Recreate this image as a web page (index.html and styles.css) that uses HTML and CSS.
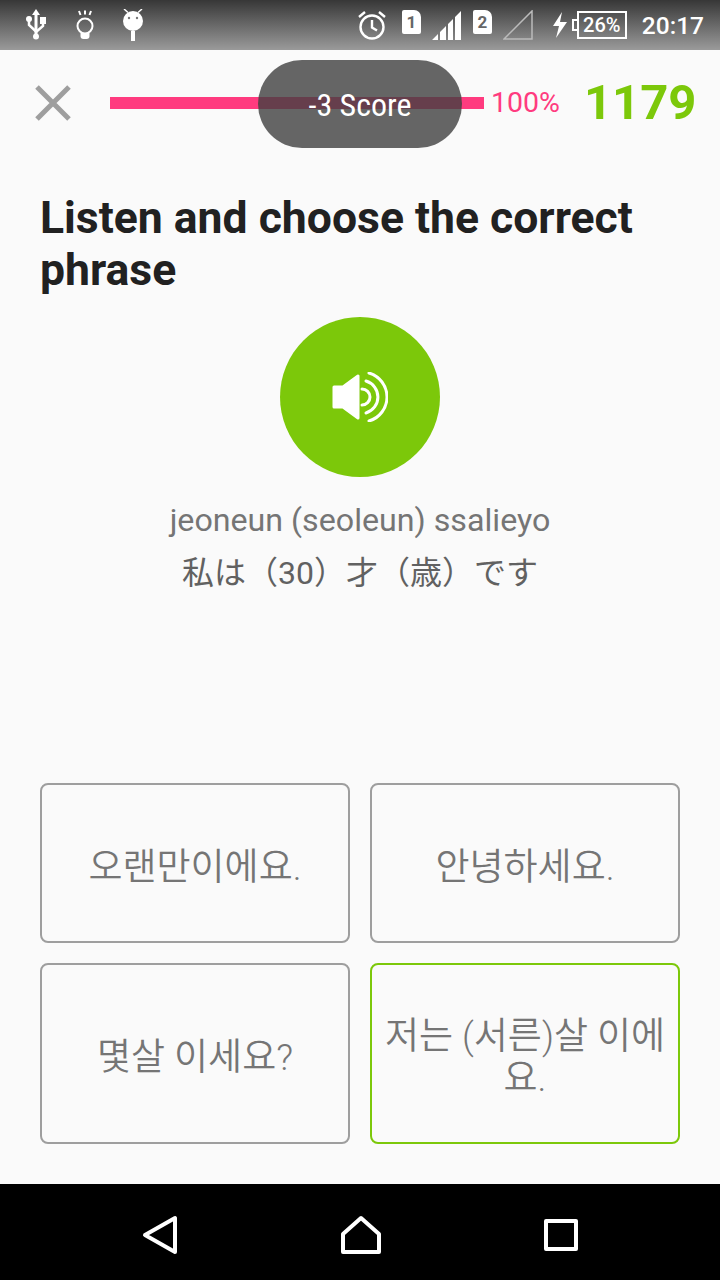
FILE: index.html
```html
<!DOCTYPE html>
<html lang="en">
  <head>
    <meta charset="UTF-8" />
    <meta name="viewport" content="width=device-width, initial-scale=1.0" />
    <title>Listen and choose</title>
    <link rel="stylesheet" href="styles.css">
  </head>
  <body>
    <div class="statusbar">
      <div class="status-left">
        <svg width="24" height="32" viewBox="0 0 24 32" fill="#fff" stroke="#fff">
          <path d="M12 0l4 6H8z" stroke="none"/>
          <path d="M12 4v24" stroke-width="3" fill="none"/>
          <path d="M5 11v5l7 6.500M19 14v3l-7 6" stroke-width="2.500" fill="none"/>
          <circle cx="5" cy="10" r="3" stroke="none"/>
          <rect x="16" y="8" width="6" height="7" stroke="none"/>
          <circle cx="12" cy="27.500" r="3" stroke="none"/>
        </svg>
        <svg width="20" height="32" viewBox="0 0 20 32" fill="none" stroke="#fff" stroke-width="2">
          <circle cx="10" cy="17" r="7.500"/>
          <path d="M4 2l1.500 4M10 1.500v4M16 2l-1.500 4"/>
          <path d="M5.500 24h9v3a3 3 0 0 1-3 3h-3a3 3 0 0 1-3-3z" fill="#fff" stroke="none"/>
        </svg>
        <svg width="22" height="32" viewBox="0 0 22 32" fill="#fff">
          <path d="M2 0l4 3.500M20 0l-4 3.500" stroke="#fff" stroke-width="1.500"/>
          <circle cx="11" cy="12" r="10"/>
          <circle cx="7" cy="9" r="1.200" fill="#777"/>
          <circle cx="15" cy="9" r="1.200" fill="#777"/>
          <rect x="9" y="22" width="4" height="10"/>
        </svg>
      </div>
      <div class="status-right">
        <svg width="30" height="30" viewBox="0 0 30 30" fill="none" stroke="#fff" stroke-width="2.400">
          <circle cx="15" cy="17" r="11.500"/>
          <path d="M15 10v7.500l5 3"/>
          <path d="M2 7l6-5M28 7l-6-5"/>
        </svg>
        <div class="sim"><span>1</span></div>
        <svg class="signal" width="30" height="30" viewBox="0 0 30 30" fill="#fff">
          <path d="M0 30l6-6v6zM8 30v-8l6-6v14zM16 30V14l5-5v21zM23 30V7l6-6v29z"/>
        </svg>
        <div class="sim sim-two"><span>2</span></div>
        <svg class="signal-off" width="30" height="30" viewBox="0 0 30 30" fill="none" stroke="#bbb" stroke-width="1.500">
          <path d="M1 29L29 1v28z"/>
        </svg>
        <svg class="bolt" width="16" height="26" viewBox="0 0 16 26" fill="#fff">
          <path d="M10 0L1 14h6l-3 12 11-16H8z"/>
        </svg>
        <div class="battery"><span class="battery-cap"></span>26%</div>
        <div class="clock">20:17</div>
      </div>
    </div>

    <div class="screen">
      <div class="topbar">
        <svg class="close" width="36" height="36" viewBox="0 0 36 36" stroke="#9e9e9e" stroke-width="5">
          <path d="M2 2l32 32M34 2L2 34"/>
        </svg>
        <div class="progress"></div>
        <div class="percent">100%</div>
        <div class="score">1179</div>
        <div class="toast">-3 Score</div>
      </div>

      <h1 class="question">Listen and choose the correct phrase</h1>

      <div class="play">
        <svg width="56" height="50" viewBox="0 0 56 50" fill="none" stroke="#fff" stroke-width="3" stroke-linecap="round">
          <path d="M2 15h9L26 4v42L11 35H2z" fill="#fff" stroke-linejoin="round"/>
          <path d="M30 17A8 8 0 0 1 30 33"/>
          <path d="M34 9A16.700 16.700 0 0 1 34 41"/>
          <path d="M37 1A25 25 0 0 1 37 49"/>
        </svg>
      </div>

      <div class="roman">jeoneun (seoleun) ssalieyo</div>
      <div class="meaning">私は（30）才（歳）です</div>

      <div class="choices">
        <div class="choice">오랜만이에요.</div>
        <div class="choice">안녕하세요.</div>
        <div class="choice">몇살 이세요?</div>
        <div class="choice choice-right">저는 (서른)살 이에요.</div>
      </div>
    </div>

    <div class="navbar">
      <svg width="36" height="40" viewBox="0 0 36 40" fill="none" stroke="#fff" stroke-width="4" stroke-linejoin="round">
        <path d="M33 3v34L3 20z"/>
      </svg>
      <svg width="40" height="40" viewBox="0 0 40 40" fill="none" stroke="#fff" stroke-width="4" stroke-linejoin="round">
        <path d="M20 3L38 19v18H2V19z"/>
      </svg>
      <svg width="34" height="34" viewBox="0 0 34 34" fill="none" stroke="#fff" stroke-width="4" stroke-linejoin="round">
        <rect x="2" y="3" width="30" height="28"/>
      </svg>
    </div>
  </body>
</html>
```
FILE: styles.css
```css
* {
  box-sizing: border-box;
}

body {
  margin: 0;
  width: 720px;
  height: 1280px;
  display: flex;
  flex-direction: column;
  overflow: hidden;
  font-family: Roboto, "Noto Sans CJK KR", sans-serif;
  background-color: #fafafa;
}

.statusbar {
  height: 50px;
  display: flex;
  justify-content: space-between;
  align-items: center;
  padding: 0 16px 0 24px;
  background: linear-gradient(#373737, #9a9a9a);
  color: #fff;
}

.status-left {
  display: flex;
  align-items: center;
  gap: 27px;
}

.status-right {
  display: flex;
  align-items: center;
}

.sim {
  width: 19px;
  height: 24px;
  margin: 0 0 7px 15px;
  display: flex;
  align-items: center;
  justify-content: center;
  background-color: #fff;
  border-radius: 2px 7px 2px 2px;
  color: #666;
  font-size: 17px;
  font-weight: 700;
}

.signal {
  margin-left: 11px;
}

.sim-two {
  margin-left: 11px;
}

.signal-off {
  margin-left: 11px;
}

.bolt {
  margin-left: 19px;
}

.battery {
  position: relative;
  width: 50px;
  height: 28px;
  margin-left: 9px;
  border: 2px solid #fff;
  font-size: 20px;
  font-weight: 500;
  line-height: 24px;
  text-align: center;
}

.battery-cap {
  position: absolute;
  left: -7px;
  top: 6px;
  width: 5px;
  height: 12px;
  border: 2px solid #fff;
  border-right: none;
}

.clock {
  margin-left: 15px;
  padding-top: 1px;
  font-size: 24.5px;
  font-weight: 500;
}

.screen {
  flex: 1;
  display: flex;
  flex-direction: column;
  padding: 0 40px;
}

.topbar {
  position: relative;
  height: 105px;
  margin: 0 -25px 0 -5px;
  display: flex;
  align-items: center;
}

.close {
  flex: none;
}

.progress {
  width: 374px;
  height: 12px;
  margin-left: 39px;
  background-color: #ff3b7f;
}

.percent {
  margin-left: 7px;
  font-size: 28.500px;
  color: #ff3b7f;
}

.score {
  margin-left: 24px;
  font-size: 49px;
  font-weight: 700;
  color: #7cc80a;
}

.toast {
  position: absolute;
  left: 223px;
  top: 10px;
  width: 204px;
  height: 88px;
  display: flex;
  align-items: center;
  justify-content: center;
  padding-top: 2px;
  border-radius: 44px;
  background-color: rgba(64, 64, 64, 0.8);
  color: #fff;
  font-size: 32px;
  font-stretch: condensed;
}

.question {
  margin: 37px 0 0;
  font-size: 44.500px;
  line-height: 52px;
  font-weight: 700;
  color: #212121;
}

.play {
  width: 160px;
  height: 160px;
  margin: 21px auto 0;
  display: flex;
  align-items: center;
  justify-content: center;
  border-radius: 50%;
  background-color: #7cc80a;
}

.roman {
  margin-top: 24px;
  text-align: center;
  font-size: 32.200px;
  line-height: 38px;
  color: #757575;
}

.meaning {
  margin-top: 15px;
  text-align: center;
  font-family: Roboto, "Noto Sans CJK JP", sans-serif;
  font-size: 32px;
  line-height: 38px;
  color: #616161;
}

.choices {
  margin-top: auto;
  margin-bottom: 40px;
  display: grid;
  grid-template-columns: 310px 310px;
  grid-template-rows: 160px 181px;
  gap: 20px;
}

.choice {
  display: flex;
  align-items: center;
  justify-content: center;
  padding: 9px 12px 0;
  border: 2px solid #9e9e9e;
  border-radius: 8px;
  text-align: center;
  font-size: 37px;
  font-weight: 350;
  line-height: 42px;
  color: #757575;
}

.choice-right {
  border-color: #7cc80a;
}

.navbar {
  height: 96px;
  display: flex;
  justify-content: space-between;
  align-items: center;
  padding: 5px 142px 0 142px;
  background-color: #000;
}
```
